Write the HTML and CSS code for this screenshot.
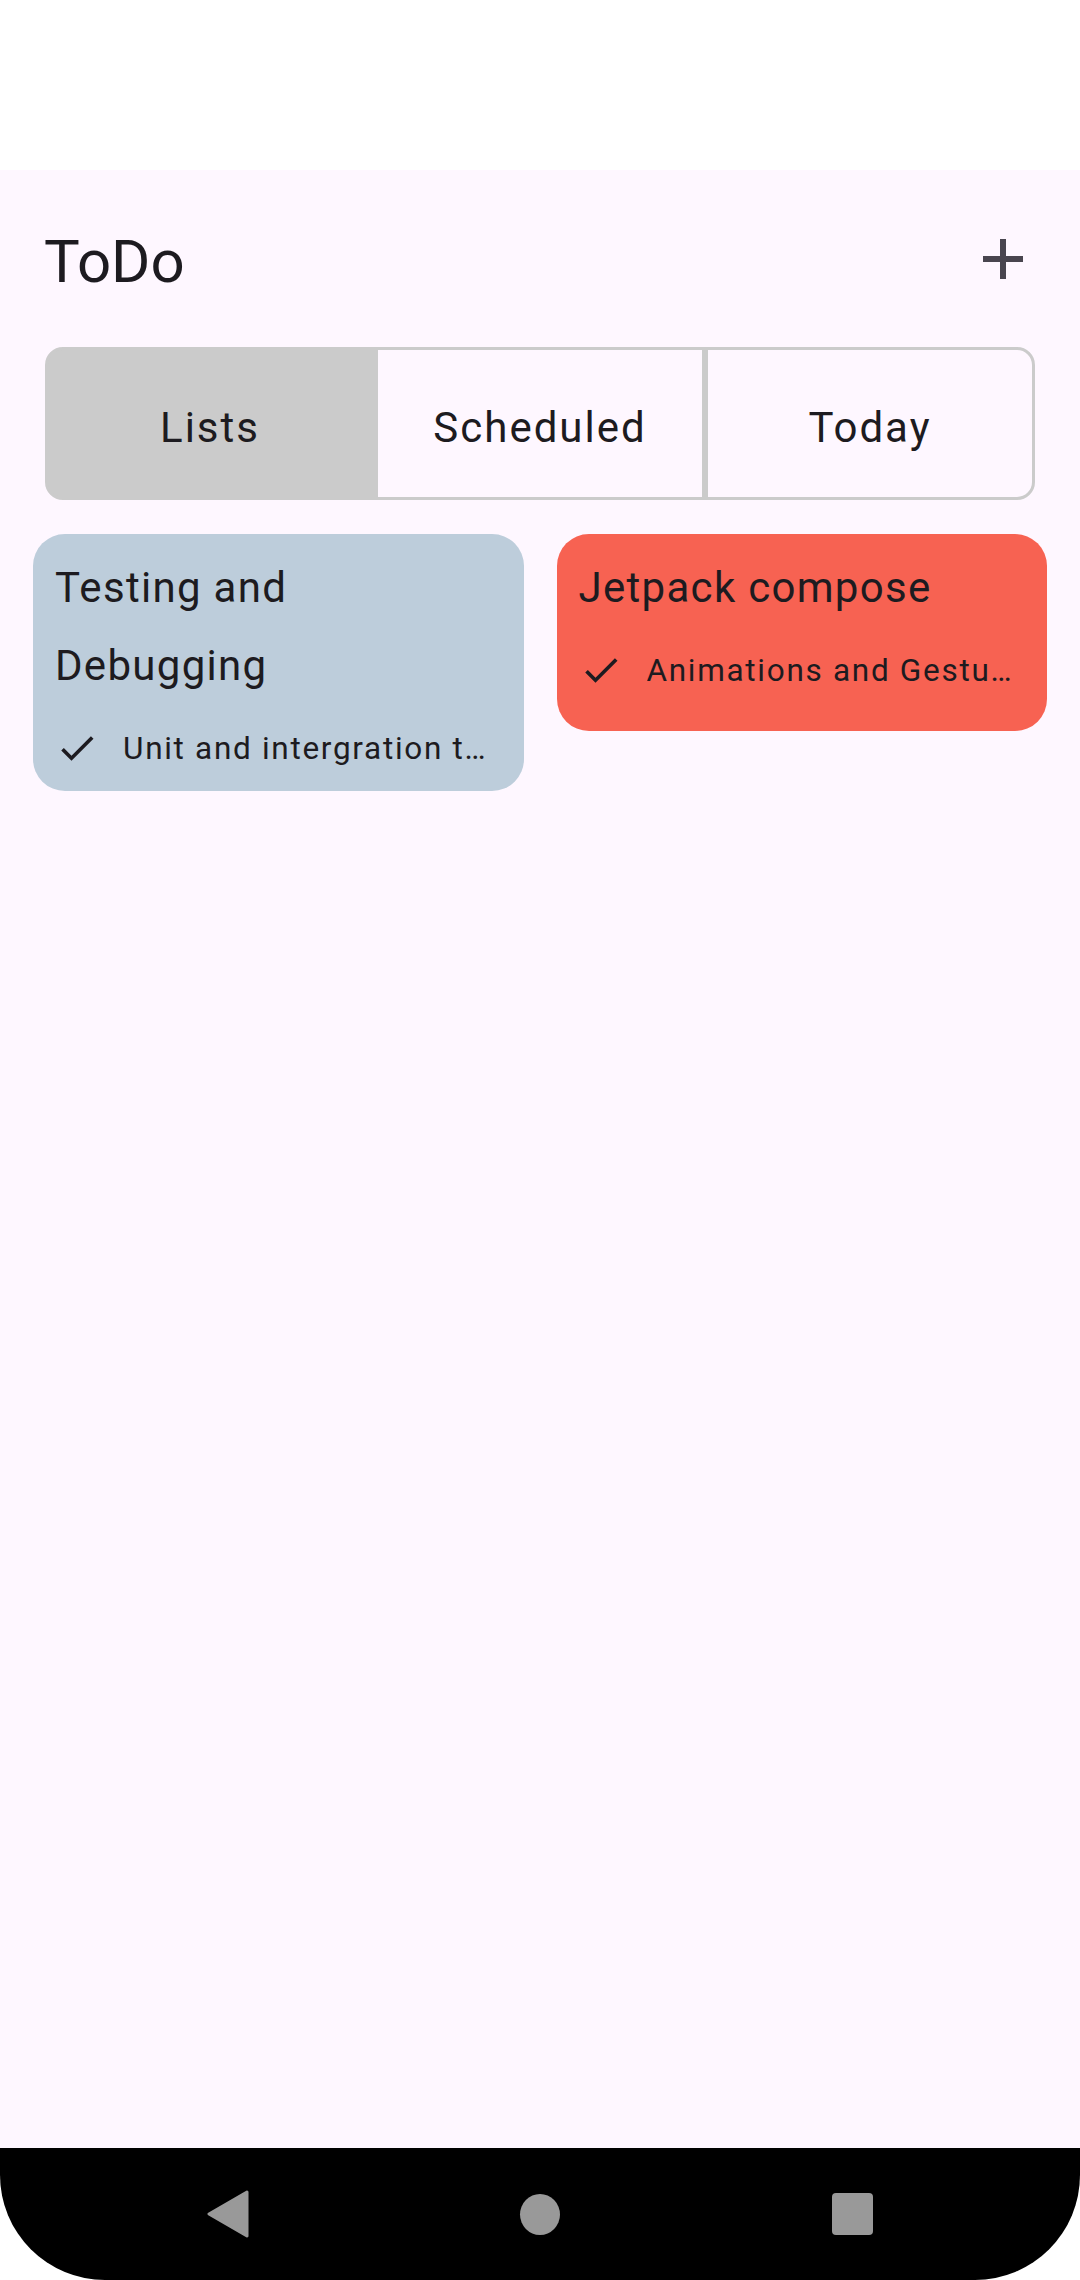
FILE: index.html
```html
<!DOCTYPE html>
<html lang="en">
<head>
<meta charset="utf-8">
<title>ToDo</title>
<link rel="stylesheet" href="styles.css">
</head>
<body>
<div class="screen">
  <div class="status"></div>
  <main class="app">
    <header class="topbar">
      <h1 class="title">ToDo</h1>
      <button class="add" aria-label="Add">
        <svg width="40" height="40" viewBox="0 0 40 40"><rect x="17" y="0" width="6" height="40" fill="#49454F"/><rect x="0" y="17" width="40" height="6" fill="#49454F"/></svg>
      </button>
    </header>
    <div class="segmented">
      <button class="seg seg-first seg-active">Lists</button>
      <button class="seg">Scheduled</button>
      <button class="seg seg-last">Today</button>
    </div>
    <div class="cards">
      <article class="card card-blue">
        <h2 class="card-title">Testing and Debugging</h2>
        <div class="task">
          <svg class="check" width="44" height="44" viewBox="0 0 24 24"><path d="M9 16.17L4.83 12l-1.42 1.41L9 19 21 7l-1.41-1.41z" fill="#1D1B20"/></svg>
          <span class="task-text">Unit and intergration t…</span>
        </div>
      </article>
      <article class="card card-red">
        <h2 class="card-title">Jetpack compose</h2>
        <div class="task">
          <svg class="check" width="44" height="44" viewBox="0 0 24 24"><path d="M9 16.17L4.83 12l-1.42 1.41L9 19 21 7l-1.41-1.41z" fill="#1D1B20"/></svg>
          <span class="task-text">Animations and Gestu…</span>
        </div>
      </article>
    </div>
  </main>
  <nav class="navbar">
    <div class="nav-cell">
      <svg width="42" height="48" viewBox="0 0 42 48"><polygon points="40,2 2,24 40,46" fill="#999999" stroke="#999999" stroke-width="3" stroke-linejoin="round"/></svg>
    </div>
    <div class="nav-cell"><span class="home"></span></div>
    <div class="nav-cell"><span class="recents"></span></div>
  </nav>
</div>
</body>
</html>
```

FILE: styles.css
```css
* { box-sizing: border-box; }
html, body { margin: 0; padding: 0; }
body {
  background: #ffffff;
  font-family: Roboto, "Noto Sans", "Liberation Sans", sans-serif;
  color: #1D1B20;
}
.screen {
  width: 1080px;
  height: 2280px;
  display: flex;
  flex-direction: column;
  background: #ffffff;
}
.status {
  height: 170px;
  flex: none;
  background: #ffffff;
}
.app {
  flex: 1;
  background: #FEF7FF;
}
.topbar {
  display: flex;
  justify-content: space-between;
  align-items: flex-start;
  padding: 58px 57px 0 44px;
}
.title {
  margin: 0;
  font-size: 60px;
  line-height: 68px;
  font-weight: 400;
  color: #1D1B20;
}
.add {
  margin-top: 11px;
  padding: 0;
  border: 0;
  background: none;
  width: 40px;
  height: 40px;
  display: block;
}
.add svg { display: block; }
.segmented {
  display: flex;
  margin: 51px 45px 0 45px;
  height: 153px;
}
.seg {
  flex: 1;
  border: 3px solid #CBCBCB;
  background: transparent;
  font-family: Roboto, "Noto Sans", "Liberation Sans", sans-serif;
  font-size: 42px;
  letter-spacing: 2px;
  color: #1D1B20;
  padding: 7px 0 0 0;
}
.seg-first { border-radius: 18px 0 0 18px; }
.seg-last { border-radius: 0 18px 18px 0; }
.seg-active { background: #CBCBCB; }
.cards {
  display: grid;
  grid-template-columns: 1fr 1fr;
  gap: 33px;
  padding: 0 33px;
  margin-top: 34px;
  align-items: start;
}
.card {
  border-radius: 32px;
  padding: 15px 22px 21px 22px;
  min-height: 197px;
  min-width: 0;
}
.card-blue { background: #BDCDDB; }
.card-red { background: #F76252; }
.card-title {
  margin: 0;
  padding-right: 20px;
  font-size: 42px;
  font-weight: 400;
  letter-spacing: 1.3px;
  line-height: 78px;
}
.task {
  display: flex;
  align-items: center;
  gap: 24px;
  margin-top: 21px;
  min-width: 0;
}
.check { flex: none; display: block; }
.task-text {
  font-size: 31.5px;
  letter-spacing: 1.7px;
  white-space: nowrap;
  overflow: hidden;
  text-overflow: ellipsis;
  min-width: 0;
}
.navbar {
  height: 132px;
  flex: none;
  background: #000000;
  border-radius: 0 0 105px 105px;
  display: grid;
  grid-template-columns: 315px 310px 315px;
  justify-content: center;
  align-items: center;
}
.nav-cell {
  display: flex;
  justify-content: center;
  align-items: center;
}
.nav-cell svg { display: block; }
.home {
  width: 40px;
  height: 41px;
  border-radius: 50%;
  background: #999999;
}
.recents {
  width: 41px;
  height: 42px;
  border-radius: 4px;
  background: #999999;
}
```
